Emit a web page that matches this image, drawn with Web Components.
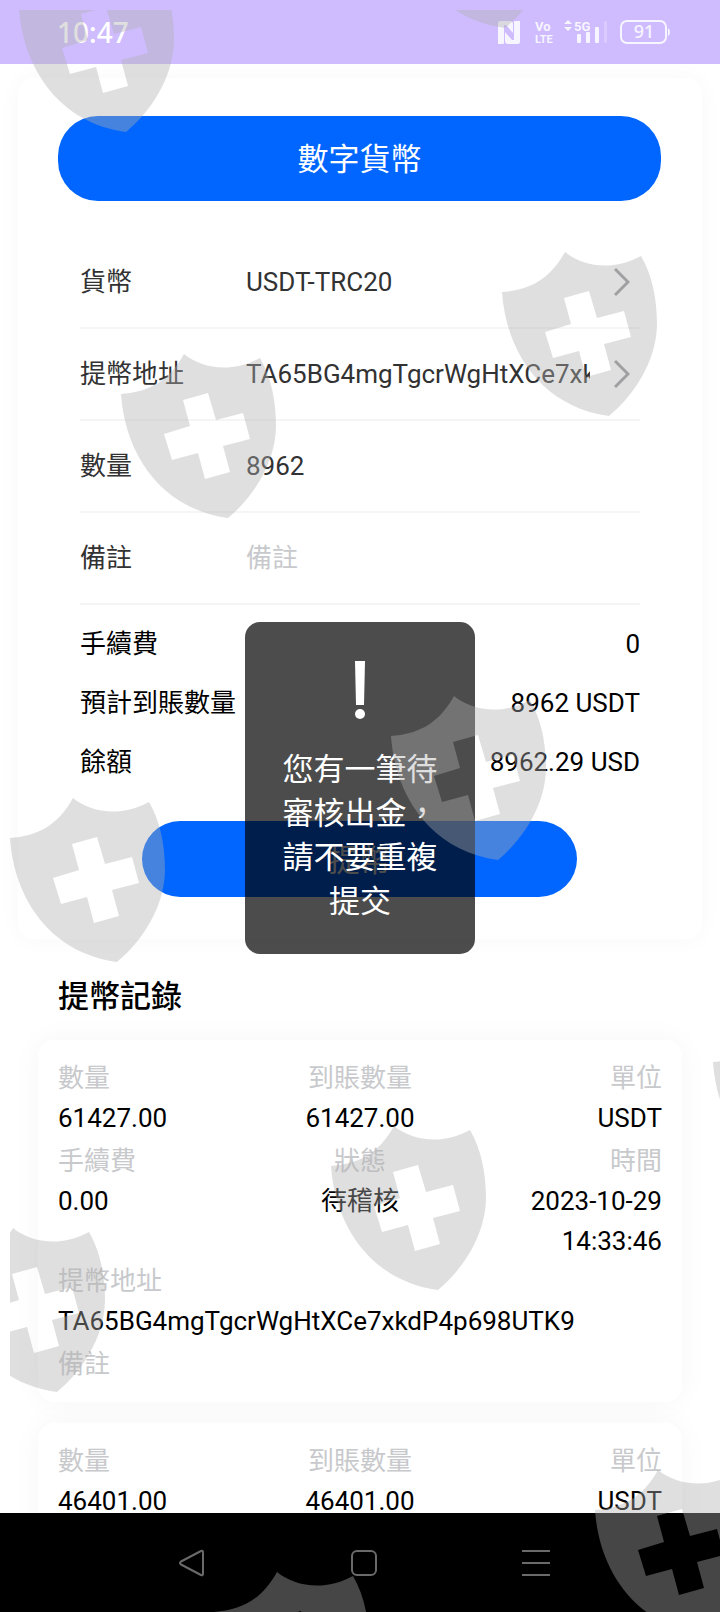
<!DOCTYPE html>
<html lang="zh-Hant">
<head>
<meta charset="utf-8">
<meta name="viewport" content="width=device-width, initial-scale=1">
<title>提幣</title>
<style>
  body {
    margin: 0;
    background: #fff;
    color: #000;
    font-family: Roboto, "Noto Sans CJK TC", sans-serif;
    font-size: 26px;
    line-height: 40px;
  }
</style>
</head>
<body>
<withdraw-page></withdraw-page>

<!-- 整頁 -->
<template id="page-template">
  <style>
    :host { display: flex; flex-direction: column; height: 100vh; position: relative; overflow: hidden; }
    main { flex: 1; min-height: 0; overflow: hidden; padding: 14px 18px 0; }
    h2 { margin: 38px 40px 23px; font-size: 31px; line-height: 40px; font-weight: 500; }
    .records { display: flex; flex-direction: column; gap: 21px; padding: 0 20px; }
  </style>
  <status-bar></status-bar>
  <main>
    <withdraw-form></withdraw-form>
    <h2>提幣記錄</h2>
    <div class="records">
      <record-card amount="61427.00" fee="0.00" status="待稽核" time="2023-10-29 14:33:46" address="TA65BG4mgTgcrWgHtXCe7xkdP4p698UTK9"></record-card>
      <record-card amount="46401.00" short></record-card>
    </div>
  </main>
  <nav-bar></nav-bar>
  <toast-box>您有一筆待審核出金，請不要重複提交</toast-box>
  <shield-layer></shield-layer>
</template>

<!-- 狀態列 -->
<template id="status-template">
  <style>
    :host { display: flex; align-items: center; justify-content: space-between; height: 64px; padding: 0 50px 0 57px; background: #cfbcff; color: #fff; }
    time { font: 500 28px/40px "Noto Sans", sans-serif; }
    svg { display: block; opacity: .85; }
    text { fill: #fff; font-weight: 700; }
  </style>
  <time>10:47</time>
  <svg width="174" height="28" viewBox="0 0 174 28" fill="#fff">
    <path d="M2 5q0-2 2-2h10q3 0 3 3v9l-7-8H8v18q0 1-1 1H2zM18 3h6v21q0 2-2 2H12q-3 0-3-3v-9l7 8h2z"/>
    <text x="39" y="13" font-family="Liberation Sans Narrow, Roboto" font-size="13">Vo</text>
    <text x="39" y="25" font-family="Liberation Sans Narrow, Roboto" font-size="11">LTE</text>
    <path d="M68 6l4-4 4 4zM68 9h8l-4 4z"/>
    <text x="78" y="13" font-family="Roboto" font-size="13">5G</text>
    <rect x="81" y="16" width="4" height="9" rx="1"/>
    <rect x="90" y="14" width="4" height="11" rx="1"/>
    <rect x="99" y="9" width="4" height="16" rx="1"/>
    <rect x="108" y="3" width="3" height="22" rx="1" opacity=".25"/>
    <rect x="125" y="3" width="45" height="22" rx="6" fill="none" stroke="#fff" stroke-width="2"/>
    <path d="M172 10q2 1 2 4t-2 4z"/>
    <text x="148" y="20" text-anchor="middle" font-family="Noto Sans" font-size="18" style="font-weight:500">91</text>
  </svg>
</template>

<!-- 提幣表單 -->
<template id="form-template">
  <style>
    :host { display: block; background: #fff; border-radius: 16px; padding: 38px 41px 42px 40px; box-shadow: 0 0 24px rgba(0, 0, 0, .03); }
    button { display: block; border: 0; padding: 0 0 4px; background: #06f; color: #fff; font-family: inherit; }
    .tab { width: 100%; height: 85px; border-radius: 40px; font-size: 31px; }
    .fields { padding: 36px 21px 0 22px; }
    dl { margin: 0; padding: 10px 21px 0 22px; }
    dl div { display: flex; justify-content: space-between; line-height: 59px; }
    dd { margin: 0; }
    .submit { width: 72%; height: 76px; margin: 29px auto 0; border-radius: 38px; font-size: 31px; }
  </style>
  <button class="tab" type="button">數字貨幣</button>
  <div class="fields">
    <form-field label="貨幣" value="USDT-TRC20" picker></form-field>
    <form-field label="提幣地址" value="TA65BG4mgTgcrWgHtXCe7xkdP4p698UTK9" picker></form-field>
    <form-field label="數量" value="8962"></form-field>
    <form-field label="備註" placeholder="備註"></form-field>
  </div>
  <dl>
    <div><dt>手續費</dt><dd>0</dd></div>
    <div><dt>預計到賬數量</dt><dd>8962 USDT</dd></div>
    <div><dt>餘額</dt><dd>8962.29 USD</dd></div>
  </dl>
  <button class="submit" type="button">提幣</button>
</template>

<!-- 浮水印的盾牌 -->
<template id="shield-template">
  <style>
    :host { position: absolute; inset: 10px 0 0 10px; overflow: hidden; pointer-events: none; }
    svg { position: absolute; width: 156px; height: 164px; fill: rgba(175, 175, 175, .4); }
  </style>
</template>

<script>
  // shadow root를 열고 html을 넣는다
  function open(el, html) {
    el.attachShadow({mode : 'open'});
    el.shadowRoot.innerHTML = html;
  }

  function openTemplate(el, id) {
    el.attachShadow({mode : 'open'});
    el.shadowRoot.append(document.getElementById(id).content.cloneNode(true));
  }

  class StatusBar extends HTMLElement {
    connectedCallback() { openTemplate(this, 'status-template'); }
  }
  customElements.define('status-bar', StatusBar);

  class FormField extends HTMLElement {
    connectedCallback() {
      let value = this.getAttribute('value') || '';
      let hint = this.getAttribute('placeholder') || '';
      let control = this.hasAttribute('picker')
        ? `<select id="control"><option>${value}</option></select>
           <svg width="16" height="28" viewBox="0 0 16 28" fill="none" stroke="#969799" stroke-width="3"><path d="M1 1l13 13L1 27"/></svg>`
        : `<input id="control" type="text" value="${value}" placeholder="${hint}">`;
      open(this, `
        <style>
          :host { display: flex; align-items: center; box-sizing: border-box; height: 92px; border-bottom: 2px solid #f5f5f5; color: #323233; }
          label { width: 166px; flex: none; }
          select, input { flex: 1; min-width: 0; height: 40px; margin: 0; padding: 0; border: 0; outline: 0; background: none; appearance: none; color: inherit; font: inherit; overflow: hidden; text-overflow: clip; }
          input::placeholder { color: #c8c9cc; opacity: 1; }
          svg { margin: 0 10px 0 24px; }
        </style>
        <label for="control">${this.getAttribute('label')}</label>${control}`);
    }
  }
  customElements.define('form-field', FormField);

  class WithdrawForm extends HTMLElement {
    connectedCallback() { openTemplate(this, 'form-template'); }
  }
  customElements.define('withdraw-form', WithdrawForm);

  class RecordCard extends HTMLElement {
    connectedCallback() {
      let get = (name) => this.getAttribute(name) || '';
      // short : 첫 줄만 보여준다
      let rest = this.hasAttribute('short') ? '' : `
          <div><dt>手續費</dt><dd>${get('fee')}</dd></div>
          <div><dt>狀態</dt><dd>${get('status')}</dd></div>
          <div><dt>時間</dt><dd>${get('time')}</dd></div>
          <div class="wide"><dt>提幣地址</dt><dd>${get('address')}</dd></div>
          <div class="wide"><dt>備註</dt><dd></dd></div>`;
      open(this, `
        <style>
          :host { display: block; background: #fff; border-radius: 16px; padding: 18px 20px; box-shadow: 0 0 30px rgba(0, 0, 0, .04); }
          dl { margin: 0; display: grid; grid-template-columns: 1fr 1fr 1fr; }
          dl div:nth-child(3n + 2) { text-align: center; }
          dl div:nth-child(3n) { text-align: right; }
          dl div.wide.wide { grid-column: 1 / -1; text-align: left; }
          dt { color: #c8c9cc; }
          dd { margin: 0; min-height: 43px; }
          dd:empty { display: none; }
        </style>
        <dl>
          <div><dt>數量</dt><dd>${get('amount')}</dd></div>
          <div><dt>到賬數量</dt><dd>${get('amount')}</dd></div>
          <div><dt>單位</dt><dd>USDT</dd></div>${rest}
        </dl>`);
    }
  }
  customElements.define('record-card', RecordCard);

  class NavBar extends HTMLElement {
    connectedCallback() {
      open(this, `
        <style>
          :host { display: flex; align-items: center; justify-content: center; gap: 144px; height: 99px; padding-left: 8px; background: #000; }
          button { border: 0; padding: 0; background: none; }
          svg { display: block; fill: none; stroke: #6a6a6a; stroke-width: 2; stroke-linejoin: round; }
        </style>
        <button type="button" aria-label="返回"><svg width="28" height="28"><path d="M23 2 3 12.500q-2 1.500 0 3L23 26q2 1 2-1.500v-21q0-2.500-2-1.500z"/></svg></button>
        <button type="button" aria-label="主頁"><svg width="28" height="28"><rect x="2" y="2" width="24" height="24" rx="5"/></svg></button>
        <button type="button" aria-label="選單"><svg width="28" height="28"><path d="M0 2h28M0 14h28M0 26h28"/></svg></button>`);
    }
  }
  customElements.define('nav-bar', NavBar);

  // 가운데 뜨는 알림창
  class ToastBox extends HTMLElement {
    connectedCallback() {
      open(this, `
        <style>
          :host { position: absolute; top: 622px; left: 50%; transform: translateX(-50%); box-sizing: border-box; width: 230px; padding: 36px 37px 30px; border-radius: 15px; background: rgba(0, 0, 0, .7); color: #fff; font-size: 31px; line-height: 44px; text-align: center; }
          svg { display: block; margin: 0 auto 28px; fill: #fff; }
        </style>
        <svg width="16" height="62" viewBox="0 0 16 62"><path d="M3 3h10l-1 44H4z"/><circle cx="8" cy="56" r="5"/></svg>
        <slot></slot>`);
    }
  }
  customElements.define('toast-box', ToastBox);

  class ShieldLayer extends HTMLElement {
    connectedCallback() {
      openTemplate(this, 'shield-template');
      let spots = [[19, -32], [398, -136], [502, 252], [121, 354], [391, 696], [10, 798], [713, 1022], [331, 1126], [-50, 1228], [595, 1470], [214, 1572]];
      let shield = 'M0 40C26 38 47 29 63 0 80 14 110 20 139 4 150 23 155 46 155 73 154 111 131 144 107 164 40 155 4 100 0 40Z';
      let cross = 'M62 46 87 39 95 66 122 59 129 85 102 92 109 118 84 125 77 99 51 106 43 80 69 72Z';
      this.shadowRoot.innerHTML += spots.map(([x, y]) =>
        `<svg viewBox="0 0 156 164" style="left:${x - 10}px;top:${y - 10}px"><path fill-rule="evenodd" d="${shield}${cross}"/></svg>`
      ).join('');
    }
  }
  customElements.define('shield-layer', ShieldLayer);

  class WithdrawPage extends HTMLElement {
    connectedCallback() { openTemplate(this, 'page-template'); }
  }
  customElements.define('withdraw-page', WithdrawPage);
</script>
</body>
</html>
